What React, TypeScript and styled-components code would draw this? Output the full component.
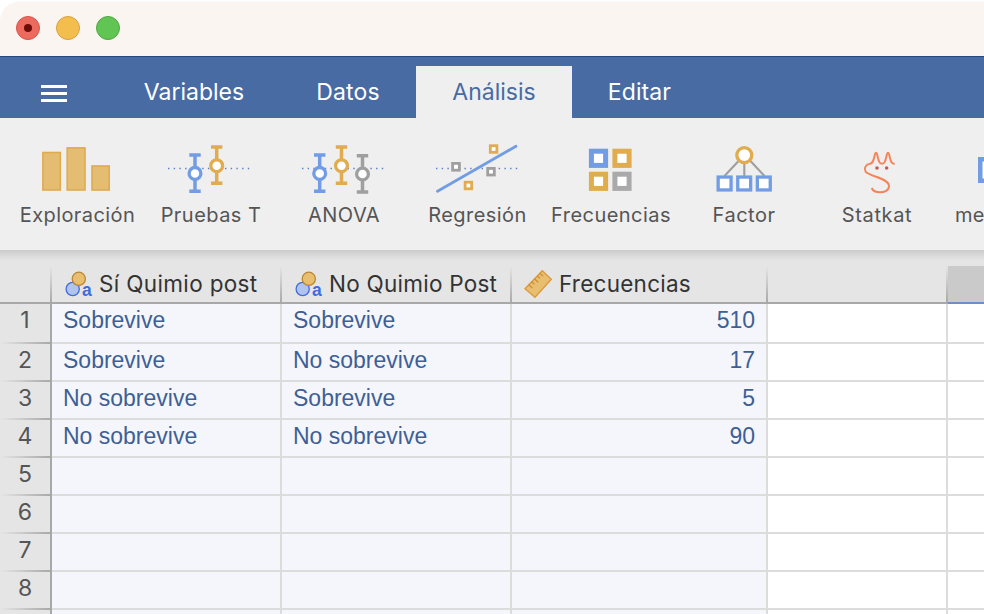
import React from 'react';
import styled, { createGlobalStyle } from 'styled-components';

const BLUE = '#729ce4';
const GOLD = '#e0ac4f';
const GREY = '#9f9f9f';

const GlobalStyle = createGlobalStyle`
  html, body { margin: 0; padding: 0; background: #fff; }
  *, *::before, *::after { box-sizing: border-box; }
`;

const Window = styled.div`
  width: 984px;
  height: 614px;
  overflow: hidden;
  display: flex;
  flex-direction: column;
  background: #fff;
  font-family: Inter, 'Liberation Sans', sans-serif;
`;

const TitleBar = styled.header`
  flex: none;
  height: 55px;
  margin-top: 1px;
  padding: 0 0 2px 16px;
  display: flex;
  align-items: center;
  gap: 16px;
  background: #faf5f0;
  border-top: 1px solid #fcf9f6;
  border-top-left-radius: 20px;
`;

const Light = styled.span<{ $fill: string; $edge: string }>`
  width: 24px;
  height: 24px;
  border-radius: 50%;
  display: flex;
  align-items: center;
  justify-content: center;
  background: ${p => p.$fill};
  border: 1px solid ${p => p.$edge};
`;

const LightDot = styled.span`
  width: 8px;
  height: 8px;
  border-radius: 50%;
  background: #6e0d08;
`;

const TabBar = styled.nav`
  flex: none;
  height: 62px;
  display: flex;
  align-items: flex-end;
  background: #486ba4;
  border-top: 1px solid #27477e;
`;

const MenuButton = styled.button`
  width: 108px;
  height: 52px;
  padding: 3px 0 0 41px;
  border: 0;
  background: none;
  display: flex;
  flex-direction: column;
  justify-content: center;
  gap: 4px;
`;

const MenuLine = styled.span`
  width: 26px;
  height: 3px;
  background: #fff;
`;

const Tab = styled.button<{ $width: number; $spacing: number; $active?: boolean }>`
  width: ${p => p.$width}px;
  height: 52px;
  padding: 0;
  border: 0;
  font: 400 23px/52px Inter, sans-serif;
  letter-spacing: ${p => p.$spacing}px;
  text-align: center;
  white-space: nowrap;
  color: ${p => (p.$active ? '#486ba4' : '#fff')};
  background: ${p => (p.$active ? '#efefef' : 'transparent')};
`;

const Ribbon = styled.section`
  flex: none;
  height: 132px;
  padding: 22px 0 0 10px;
  display: grid;
  grid-template-columns: 134px 133px 133px 134px 133px 133px 133px 134px;
  background: #efefef;
`;

const Tool = styled.div`
  display: flex;
  flex-direction: column;
  min-width: 0;
`;

const ToolIcon = styled.svg`
  display: block;
  width: 100%;
  height: 60px;
  overflow: visible;
`;

const ToolLabel = styled.span<{ $spacing: number; $start?: boolean }>`
  align-self: ${p => (p.$start ? 'flex-start' : 'center')};
  padding-left: ${p => (p.$start ? 12 : 1)}px;
  font-size: 20px;
  line-height: 31px;
  letter-spacing: ${p => p.$spacing}px;
  white-space: nowrap;
  color: #555;
`;

const Sheet = styled.main`
  flex: none;
  width: 1128px;
`;

const HeaderShade = styled.div`
  height: 16px;
  background: linear-gradient(#cbcbcb 0, #d3d3d3 3px, #e0e0e0 8px, #e5e5e5 11px);
`;

const SheetRow = styled.div<{ $height: number }>`
  height: ${p => p.$height}px;
  display: grid;
  grid-template-columns: 52px 230px 230px 256px 180px 180px;
`;

const ColumnHead = styled.div<{ $selected?: boolean }>`
  display: flex;
  align-items: center;
  padding-left: 12px;
  border-bottom: 2px solid ${p => (p.$selected ? '#6c8fc7' : '#a8a8a8')};
  background: ${p =>
    p.$selected
      ? '#cacaca'
      : 'linear-gradient(#e5e5e5, #a9a9a9) right / 2px 100% no-repeat #e5e5e5'};
`;

const HeadIcon = styled.svg`
  flex: none;
  width: 30px;
  height: 36px;
  overflow: visible;
`;

const HeadText = styled.span<{ $spacing: number }>`
  margin-left: 5px;
  font-size: 22.5px;
  line-height: 36px;
  letter-spacing: ${p => p.$spacing}px;
  white-space: nowrap;
  color: #333;
`;

const RowHead = styled.div`
  border-right: 2px solid #a8a8a8;
  background: linear-gradient(90deg, #e5e5e5, #a9a9a9) bottom / 100% 2px no-repeat #e5e5e5;
  font-size: 23px;
  line-height: 32px;
  text-align: center;
  color: #555;
`;

const Cell = styled.div<{ $filled?: boolean; $right?: boolean }>`
  padding: 0 ${p => (p.$right ? 11 : 0)}px 0 ${p => (p.$right ? 0 : 11)}px;
  border-right: 2px solid #dcdcdc;
  border-bottom: 2px solid #dcdcdc;
  background: ${p => (p.$filled ? '#f4f6fb' : '#fff')};
  font: 400 23px/33px 'Liberation Sans', Arial, sans-serif;
  text-align: ${p => (p.$right ? 'right' : 'left')};
  white-space: nowrap;
  color: #3e5f96;
`;

const Dots = ({ x }: { x: number }) => (
  <path
    d={`M${x} 28.5h82`}
    stroke="#5b7fc4"
    strokeWidth="1.4"
    strokeDasharray="1.4 4.3"
  />
);

const ErrorBar = ({ x, y, top, bottom, color }: { x: number; y: number; top: number; bottom: number; color: string }) => (
  <g stroke={color} fill="none">
    <path d={`M${x - 5.7} ${top}h11.4M${x - 5.7} ${bottom}h11.4M${x} ${top}V${bottom}`} strokeWidth="3.5" />
    <circle cx={x} cy={y} r="5.9" fill="#fff" strokeWidth="3.3" />
  </g>
);

const Box = ({ x, y, size, stroke, color }: { x: number; y: number; size: number; stroke: number; color: string }) => (
  <rect
    x={x - size / 2 + stroke / 2}
    y={y - size / 2 + stroke / 2}
    width={size - stroke}
    height={size - stroke}
    fill="#fff"
    stroke={color}
    strokeWidth={stroke}
  />
);

const BarsIcon = () => (
  <ToolIcon>
    <g fill="#e4bd72" stroke="#deab50" strokeWidth="1.6">
      <rect x="32.9" y="12.5" width="17.4" height="37.5" />
      <rect x="57.2" y="7.9" width="17.8" height="42.1" />
      <rect x="82" y="26" width="17.2" height="24" />
    </g>
  </ToolIcon>
);

const TTestIcon = () => (
  <ToolIcon>
    <Dots x={24} />
    <ErrorBar x={51} y={33.4} top={15} bottom={51.3} color={BLUE} />
    <ErrorBar x={72.7} y={25.7} top={7} bottom={43.3} color={GOLD} />
  </ToolIcon>
);

const AnovaIcon = () => (
  <ToolIcon>
    <Dots x={25} />
    <ErrorBar x={42.7} y={33.4} top={15} bottom={51.3} color={BLUE} />
    <ErrorBar x={64.5} y={25.7} top={7} bottom={43.3} color={GOLD} />
    <ErrorBar x={85.5} y={34} top={15.7} bottom={52} color={GREY} />
  </ToolIcon>
);

const RegressionIcon = () => (
  <ToolIcon>
    <Dots x={26} />
    <path d="M27.5 51.2L106 6.2" stroke={BLUE} strokeWidth="2.8" strokeLinecap="round" />
    <Box x={46} y={26.8} size={9.6} stroke={2.8} color={GREY} />
    <Box x={83.6} y={9} size={9.4} stroke={2.8} color={GOLD} />
    <Box x={81} y={31.7} size={9.4} stroke={2.8} color={GREY} />
    <Box x={58.4} y={45.5} size={9.4} stroke={2.8} color={GOLD} />
  </ToolIcon>
);

const FrequenciesIcon = () => (
  <ToolIcon>
    <Box x={54.5} y={18.3} size={19.2} stroke={5} color={BLUE} />
    <Box x={78} y={18.3} size={19.2} stroke={5} color={GOLD} />
    <Box x={54.5} y={41.3} size={19.2} stroke={5} color={GOLD} />
    <Box x={78} y={41.3} size={19.2} stroke={5} color="#aaaaaa" />
  </ToolIcon>
);

const FactorIcon = () => (
  <ToolIcon>
    <path d="M62 20.5L47.5 36M67.3 22V36M73 20.5L87.5 36" stroke={GREY} strokeWidth="2.1" />
    <circle cx="67.3" cy="15.1" r="7.5" fill="#fff" stroke={GOLD} strokeWidth="3.3" />
    <Box x={47.6} y={43.5} size={16.2} stroke={3.3} color={BLUE} />
    <Box x={67.2} y={43.5} size={16.2} stroke={3.3} color={BLUE} />
    <Box x={86.8} y={43.5} size={16.2} stroke={3.3} color={BLUE} />
  </ToolIcon>
);

const CatIcon = () => (
  <ToolIcon>
    <g transform="translate(-30 -10) scale(.33333)">
      <path
        d="M344 102C334 102 332 94 327 72Q324 64 321 72C316 94 314 101 306 101C298 101 296 94 291 72Q288 64 285 72C280 97 276 101 270 101C256 104 251 116 257 125C267 139 325 144 327 167C328 182 312 187 300 187C288 187 278 181 275 174"
        fill="none"
        stroke="#f58558"
        strokeWidth="5.8"
      />
      <circle cx="291" cy="114" r="5.4" fill="#cc5b4c" />
      <circle cx="320" cy="114" r="5.4" fill="#cc5b4c" />
    </g>
  </ToolIcon>
);

const ModuleIcon = () => (
  <ToolIcon>
    <Box x={48} y={30} size={26} stroke={4.5} color={BLUE} />
  </ToolIcon>
);

const NominalIcon = () => (
  <HeadIcon>
    <circle cx="8.7" cy="23" r="6.6" fill="#b0c4ef" stroke="#3f6ddb" strokeWidth="1.3" />
    <circle cx="14.8" cy="12.8" r="6.6" fill="#e8bf70" stroke="#b98733" strokeWidth="1.3" />
    <text x="18" y="30" fontFamily="Liberation Sans, Arial, sans-serif" fontWeight="700" fontSize="17.5" fill="#3f6ddb">
      a
    </text>
  </HeadIcon>
);

const RulerIcon = () => (
  <HeadIcon>
    <path d="M18.3 4.8L27.3 13.3L11 31.2L1 22.8Z" fill="#e8bf70" stroke="#dc9a3c" strokeWidth="1.4" />
    <path
      d="M4.7 18.7l3.8 3.4M7.5 15.8l2.8 2.4M10.4 12.8l3.8 3.4M13.2 9.9l2.8 2.4M15.9 7.2l3.2 2.9"
      stroke="#c98c35"
      strokeWidth="1.2"
    />
  </HeadIcon>
);

const tools = [
  { label: 'Exploración', spacing: 0.42, Icon: BarsIcon },
  { label: 'Pruebas T', spacing: 0.46, Icon: TTestIcon },
  { label: 'ANOVA', spacing: 0.5, Icon: AnovaIcon },
  { label: 'Regresión', spacing: 0.46, Icon: RegressionIcon },
  { label: 'Frecuencias', spacing: 0.45, Icon: FrequenciesIcon },
  { label: 'Factor', spacing: 0.5, Icon: FactorIcon },
  { label: 'Statkat', spacing: 0.62, Icon: CatIcon },
  { label: 'me', spacing: 0.3, Icon: ModuleIcon, start: true },
];

const rows: string[][] = [
  ['Sobrevive', 'Sobrevive', '510'],
  ['Sobrevive', 'No sobrevive', '17'],
  ['No sobrevive', 'Sobrevive', '5'],
  ['No sobrevive', 'No sobrevive', '90'],
  [],
  [],
  [],
  [],
];

export default function App() {
  return (
    <>
      <GlobalStyle />
      <Window>
        <TitleBar>
          <Light $fill="#ec6a5e" $edge="#d6544a"><LightDot /></Light>
          <Light $fill="#f4be4f" $edge="#d8a13f" />
          <Light $fill="#61c554" $edge="#50a73f" />
        </TitleBar>
        <TabBar>
          <MenuButton aria-label="Menu">
            <MenuLine />
            <MenuLine />
            <MenuLine />
          </MenuButton>
          <Tab $width={172} $spacing={0}>Variables</Tab>
          <Tab $width={136} $spacing={0.15}>Datos</Tab>
          <Tab $width={156} $spacing={0} $active>Análisis</Tab>
          <Tab $width={135} $spacing={0.1}>Editar</Tab>
        </TabBar>
        <Ribbon>
          {tools.map(({ label, spacing, Icon, start }) => (
            <Tool key={label}>
              <Icon />
              <ToolLabel $spacing={spacing} $start={start}>{label}</ToolLabel>
            </Tool>
          ))}
        </Ribbon>
        <Sheet>
          <HeaderShade />
          <SheetRow $height={38}>
            <ColumnHead />
            <ColumnHead><NominalIcon /><HeadText $spacing={0.35}>Sí Quimio post</HeadText></ColumnHead>
            <ColumnHead><NominalIcon /><HeadText $spacing={0.25}>No Quimio Post</HeadText></ColumnHead>
            <ColumnHead><RulerIcon /><HeadText $spacing={0.25}>Frecuencias</HeadText></ColumnHead>
            <ColumnHead />
            <ColumnHead $selected />
          </SheetRow>
          {rows.map((row, i) => (
            <SheetRow key={i} $height={i === 0 ? 40 : 38}>
              <RowHead>{i + 1}</RowHead>
              <Cell $filled>{row[0]}</Cell>
              <Cell $filled>{row[1]}</Cell>
              <Cell $filled $right>{row[2]}</Cell>
              <Cell />
              <Cell />
            </SheetRow>
          ))}
          <SheetRow $height={38}>
            <RowHead />
            <Cell $filled />
            <Cell $filled />
            <Cell $filled />
            <Cell />
            <Cell />
          </SheetRow>
        </Sheet>
      </Window>
    </>
  );
}
